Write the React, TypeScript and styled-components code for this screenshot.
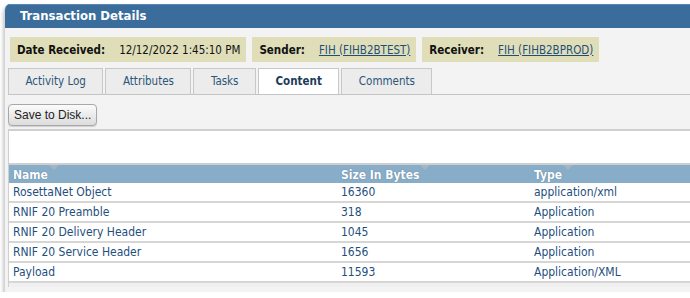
import styled, { createGlobalStyle } from "styled-components"

const GlobalStyle = createGlobalStyle`
	body {
		margin: 0;
		background: #ffffff;
		overflow: hidden;
		font-family: "DejaVu Sans Condensed", "Liberation Sans", sans-serif;
		font-size: 11.5px;
	}
`

const rows = [
	{ name: "RosettaNet Object", size: "16360", type: "application/xml" },
	{ name: "RNIF 20 Preamble", size: "318", type: "Application" },
	{ name: "RNIF 20 Delivery Header", size: "1045", type: "Application" },
	{ name: "RNIF 20 Service Header", size: "1656", type: "Application" },
	{ name: "Payload", size: "11593", type: "Application/XML" },
]

const tabs = ["Activity Log", "Attributes", "Tasks", "Content", "Comments"]

const Panel = styled.div`
	margin: 4px 0 0 4px;
	width: 710px;
	border-top-left-radius: 6px;
	overflow: hidden;
	background: #f3f3f3;
	border-left: 1px solid #d4d4d4;
	box-shadow: 0 3px 4px rgba(0, 0, 0, 0.35);
	padding-bottom: 5px;
`

const Header = styled.div`
	height: 23px;
	background: #3a6d9b;
	border-top: 1px solid #5a88b0;
	color: #ffffff;
	font-weight: bold;
	font-size: 13px;
	line-height: 22px;
	padding-left: 15px;
`

const Body = styled.div`
	padding: 9px 0 0 3px;
`

const InfoBar = styled.div`
	display: flex;
	gap: 6px;
	padding-left: 2px;
`

const InfoBox = styled.div`
	height: 25px;
	display: flex;
	align-items: center;
	background: #dfdeb8;
	padding: 0 6px 0 7px;
	color: #111111;
`

const Label = styled.span`
	font-weight: bold;
	margin-right: 14px;
`

const Link = styled.a`
	color: #1f4e78;
	text-decoration: underline;
`

const TabStrip = styled.div`
	display: flex;
	gap: 2px;
	margin-top: 6px;
	border-bottom: 1px solid #c4c4c4;
`

const Tab = styled.div<{ $active?: boolean }>`
	height: 25px;
	line-height: 25px;
	padding: 0 16.5px;
	border: 1px solid #c8c8c8;
	border-bottom: none;
	margin-bottom: ${(p) => (p.$active ? "-1px" : "0")};
	background: ${(p) => (p.$active ? "#ffffff" : "#ececec")};
	color: ${(p) => (p.$active ? "#1d3c5a" : "#2b5577")};
	font-weight: ${(p) => (p.$active ? "bold" : "normal")};
	font-size: 11.5px;
`

const Toolbar = styled.div`
	padding: 9px 0 3px 0;
`

const Button = styled.button`
	height: 22px;
	padding: 0 5px;
	font-family: "Liberation Sans", Arial, sans-serif;
	font-size: 12px;
	color: #222222;
	border: 1px solid #a8a8a8;
	border-radius: 4px;
	background: linear-gradient(#fbfbfb, #dcdcdc);
	box-shadow: 0 1px 1px rgba(0, 0, 0, 0.15);
`

const Blank = styled.div`
	height: 32px;
	background: #ffffff;
	border-top: 2px solid #cfcfcf;
	border-left: 1px solid #cfcfcf;
`

const Grid = styled.div`
	border-top: 2px solid #cfcfcf;
	border-left: 1px solid #cfcfcf;
	background: #ffffff;
`

const Row = styled.div<{ $head?: boolean }>`
	display: grid;
	grid-template-columns: 328px 193px 1fr;
	height: 18px;
	line-height: ${(p) => (p.$head ? "17px" : "19px")};
	background: ${(p) => (p.$head ? "#88adc8" : "#ffffff")};
	color: ${(p) => (p.$head ? "#ffffff" : "#1f4f7e")};
	font-weight: ${(p) => (p.$head ? "bold" : "normal")};
	font-size: 12px;
	text-shadow: ${(p) => (p.$head ? "0 0 1px rgba(40,70,100,0.6)" : "none")};
	border-bottom: ${(p) => (p.$head ? "none" : "2px solid #d6d6d6")};
`

const Cell = styled.div`
	padding-left: 4px;
	white-space: nowrap;
`

const SortArrow = styled.span`
	display: inline-block;
	width: 0;
	height: 0;
	margin-left: 1px;
	vertical-align: 9px;
	border-left: 5px solid transparent;
	border-right: 5px solid transparent;
	border-top: 5px solid #a3b6c6;
`

const Footer = styled.div`
	height: 4px;
	background: #f0f0f0;
	border-left: 1px solid #cfcfcf;
`

export default function App() {
	return (
		<>
			<GlobalStyle />
			<Panel>
				<Header>Transaction Details</Header>
				<Body>
					<InfoBar>
						<InfoBox>
							<Label>Date Received:</Label>12/12/2022 1:45:10 PM
						</InfoBox>
						<InfoBox>
							<Label>Sender:</Label>
							<Link href="#">FIH (FIHB2BTEST)</Link>
						</InfoBox>
						<InfoBox>
							<Label>Receiver:</Label>
							<Link href="#">FIH (FIHB2BPROD)</Link>
						</InfoBox>
					</InfoBar>
					<TabStrip>
						{tabs.map((t) => (
							<Tab key={t} $active={t === "Content"}>
								{t}
							</Tab>
						))}
					</TabStrip>
					<Toolbar>
						<Button>Save to Disk...</Button>
					</Toolbar>
					<Blank />
					<Grid>
						<Row $head>
							<Cell>
								Name
								<SortArrow />
							</Cell>
							<Cell>
								Size In Bytes
								<SortArrow />
							</Cell>
							<Cell>
								Type
								<SortArrow />
							</Cell>
						</Row>
						{rows.map((r) => (
							<Row key={r.name}>
								<Cell>{r.name}</Cell>
								<Cell>{r.size}</Cell>
								<Cell>{r.type}</Cell>
							</Row>
						))}
					</Grid>
					<Footer />
				</Body>
			</Panel>
		</>
	)
}
